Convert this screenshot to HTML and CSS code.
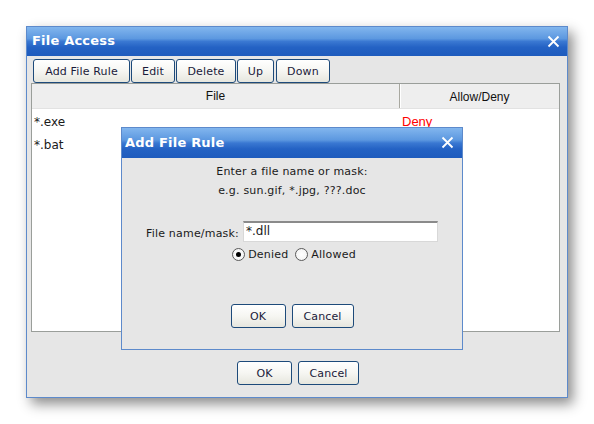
FILE: index.html
```html
<!DOCTYPE html>
<html>
<head>
<meta charset="utf-8">
<link rel="stylesheet" href="styles.css">
</head>
<body>
<div class="page">
  <div class="window">
    <div class="titlebar">
      <span class="title">File Access</span>
      <svg class="close" width="13" height="13" viewBox="0 0 13 13"><path d="M1.5 1.5 L11.5 11.5 M11.5 1.5 L1.5 11.5" stroke="#fff" stroke-width="1.8" fill="none"/></svg>
    </div>
    <div class="toolbar">
      <button class="btn btn-add">Add File Rule</button>
      <button class="btn btn-edit">Edit</button>
      <button class="btn btn-del">Delete</button>
      <button class="btn btn-up">Up</button>
      <button class="btn btn-down">Down</button>
    </div>
    <div class="table">
      <div class="thead">
        <div class="th th-file">File</div>
        <div class="th th-allow">Allow/Deny</div>
      </div>
      <div class="tbody">
        <div class="row"><span class="cell-file">*.exe</span><span class="cell-allow deny">Deny</span></div>
        <div class="row"><span class="cell-file">*.bat</span><span class="cell-allow"></span></div>
      </div>
    </div>
    <div class="footer">
      <button class="btn btn-ok">OK</button>
      <button class="btn btn-cancel">Cancel</button>
    </div>

    <div class="dialog">
      <div class="titlebar dlg-titlebar">
        <span class="title">Add File Rule</span>
        <svg class="close" width="13" height="13" viewBox="0 0 13 13"><path d="M1.5 1.5 L11.5 11.5 M11.5 1.5 L1.5 11.5" stroke="#fff" stroke-width="1.8" fill="none"/></svg>
      </div>
      <div class="dlg-body">
        <div class="line1">Enter a file name or mask:</div>
        <div class="line2">e.g. sun.gif, *.jpg, ???.doc</div>
        <div class="field">
          <label class="lbl">File name/mask:</label>
          <div class="input">*.dll</div>
        </div>
        <div class="radios">
          <span class="radio checked"></span><span class="rlabel rl-denied">Denied</span>
          <span class="radio"></span><span class="rlabel">Allowed</span>
        </div>
        <div class="dlg-buttons">
          <button class="btn btn-ok">OK</button>
          <button class="btn btn-cancel dlg-cancel">Cancel</button>
        </div>
      </div>
    </div>
  </div>
</div>
</body>
</html>
```

FILE: styles.css
```css
html, body {
  margin: 0;
  padding: 0;
  background: #ffffff;
}
.page {
  padding: 26px 0 0 26px;
  width: 594px;
  height: 424px;
  box-sizing: border-box;
  font-family: "DejaVu Sans", Verdana, sans-serif;
  font-size: 11px;
  color: #1a1a1a;
}
.window {
  position: relative;
  width: 542px;
  height: 372px;
  box-sizing: border-box;
  border: 1px solid #5d8acb;
  background: #e6e6e6;
  box-shadow: 5px 6px 12px rgba(0,0,0,0.45);
  display: flex;
  flex-direction: column;
}
.titlebar {
  height: 29px;
  flex: none;
  display: flex;
  align-items: center;
  justify-content: space-between;
  padding: 0 7px 0 5px;
  background: linear-gradient(#82b6ee 0%, #5c98e0 40%, #3a78d2 50%, #2462c4 70%, #1e5bbd 100%);
}
.title {
  color: #ffffff;
  font-weight: bold;
  font-size: 13px;
  letter-spacing: 0.2px;
  margin-top: -2px;
}
.close {
  display: block;
  margin-top: -1px;
}
.toolbar {
  display: flex;
  gap: 1px;
  padding: 3px 0 0 6px;
  height: 27px;
  box-sizing: border-box;
}
.btn {
  font-family: "DejaVu Sans", Verdana, sans-serif;
  font-size: 11px;
  letter-spacing: 0.15px;
  color: #1a1a3a;
  height: 24px;
  padding: 0;
  border: 1px solid #1d4a7a;
  border-radius: 3px;
  background: linear-gradient(#ffffff 0%, #f6f6f2 50%, #e6e6de 100%);
  box-sizing: border-box;
}
.btn-add { width: 97px; }
.btn-edit { width: 44px; }
.btn-del { width: 60px; }
.btn-up { width: 37px; }
.btn-down { width: 54px; margin-left: 1px; }
.btn-ok { width: 55px; }
.btn-cancel { width: 61px; }
.dlg-cancel { width: 62px; }

.table {
  margin: 0 7px 0 4px;
  height: 247px;
  border: 1px solid #9a9e9a;
  background: #ffffff;
  display: flex;
  flex-direction: column;
}
.thead {
  display: flex;
  height: 24px;
  background: #eeeeee;
  border-bottom: 1px solid #e2e2e2;
  flex: none;
  font-family: "Liberation Sans", Arial, sans-serif;
  font-size: 12px;
  color: #111;
}
.th {
  display: flex;
  align-items: center;
  justify-content: center;
}
.th-file {
  width: 367px;
  border-right: 1px solid #a8a8a0;
  box-shadow: 1px 0 0 #ffffff;
}
.th-allow {
  flex: 1;
  padding-top: 1px;
}
.tbody {
  flex: 1;
  padding-top: 6px;
}
.row {
  display: flex;
  height: 23px;
  font-size: 12px;
}
.cell-file {
  width: 368px;
  padding-left: 2px;
  font-family: "DejaVu Sans", Verdana, sans-serif;
  font-size: 12px;
}
.cell-allow {
  font-family: "Liberation Sans", Arial, sans-serif;
  font-size: 13px;
  margin-top: -1px;
}
.deny { color: #ff0000; }

.footer {
  flex: 1;
  display: flex;
  justify-content: center;
  align-items: flex-start;
  gap: 6px;
  padding-top: 29px;
  padding-left: 2px;
}

.dialog {
  position: absolute;
  left: 94px;
  top: 100px;
  width: 342px;
  height: 223px;
  box-sizing: border-box;
  border: 1px solid #5d8acb;
  background: #e6e6e6;
  display: flex;
  flex-direction: column;
}
.dlg-titlebar {
  height: 30px;
  padding-left: 3px;
  padding-right: 8px;
}
.dlg-body {
  display: flex;
  flex-direction: column;
  align-items: center;
  font-size: 11px;
  letter-spacing: 0.2px;
  color: #1a1a1a;
}
.line1 { margin-top: 4px; height: 19px; line-height: 19px; }
.line2 { height: 19px; line-height: 19px; }
.field {
  display: flex;
  align-items: center;
  justify-content: center;
  margin-top: 21px;
  width: 100%;
}
.lbl { margin-right: 4px; margin-top: 3px; }
.input {
  width: 195px;
  height: 21px;
  box-sizing: border-box;
  background: #fff;
  border: 1px solid #d8d8d8;
  border-top: 2px solid #8a8a8a;
  font-size: 12px;
  letter-spacing: 0;
  padding-left: 2px;
  line-height: 17px;
}
.radios {
  display: flex;
  align-items: center;
  margin-top: 6px;
  padding-left: 4px;
}
.radio {
  width: 13px;
  height: 13px;
  box-sizing: border-box;
  border: 1px solid #5a5a5a;
  border-radius: 50%;
  background: radial-gradient(#ffffff, #f0f0f0);
  position: relative;
  margin-right: 3px;
}
.radio.checked::after {
  content: "";
  position: absolute;
  left: 3px;
  top: 3px;
  width: 5px;
  height: 5px;
  border-radius: 50%;
  background: #000;
}
.rlabel { margin-right: 0; }
.rl-denied { margin-right: 7px; }
.dlg-buttons {
  display: flex;
  gap: 6px;
  margin-top: 43px;
}
```
